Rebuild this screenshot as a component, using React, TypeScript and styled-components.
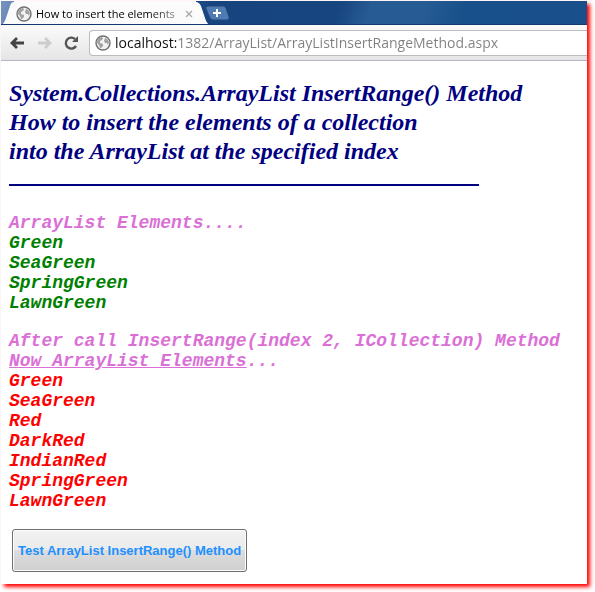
import React from "react";
import styled, { createGlobalStyle } from "styled-components";

const GlobalStyle = createGlobalStyle`
  * { box-sizing: border-box; }
  body { margin: 0; background: #fff; }
`;

const Backdrop = styled.div`
  padding: 1px 8px 8px 1px;
  overflow: hidden;
`;

const BrowserWindow = styled.div`
  background: #fff;
  box-shadow: 3px 3px 4px #f00;
`;

const TabStrip = styled.div`
  display: flex;
  height: 24px;
  overflow: hidden;
  border-bottom: 1px solid #123a70;
  background: linear-gradient(110deg, #7794bd 0, #5f82b3 20px, #17447f 200px, #17457f 320px, #275b94 350px, #275b94 400px, #17508a 440px, #1a4f8c 100%);
`;

const Tab = styled.div`
  display: flex;
  align-items: center;
  height: 24px;
  flex: none;
`;

const TabEdge = styled.svg`
  display: block;
  flex: none;
`;

const TabFace = styled.div`
  display: flex;
  align-items: center;
  gap: 4px;
  height: 24px;
  padding: 1px 3px 0 2px;
  background: #fbfbfb;
`;

const TabTitle = styled.span`
  width: 145px;
  white-space: nowrap;
  font: 11px/20px "Open Sans", "Noto Sans", sans-serif;
  color: transparent;
  background: linear-gradient(90deg, #000 112px, #999 142px);
  background-clip: text;
`;

const IconButton = styled.button`
  display: flex;
  align-items: center;
  justify-content: center;
  flex: none;
  padding: 0;
  border: 0;
  background: none;
`;

const NewTabButton = styled(IconButton)`
  margin: 4px 0 0 -5px;
  height: 16px;
`;

const Toolbar = styled.div`
  display: flex;
  align-items: center;
  height: 36px;
  padding-left: 7px;
  gap: 10px;
  background: linear-gradient(#fbfbfb, #e5e5e5);
  border-bottom: 1px solid #b4b8c4;
`;

const AddressBar = styled.label`
  display: flex;
  align-items: center;
  flex: 1;
  gap: 4px;
  height: 26px;
  padding-left: 5px;
  border: 1px solid #bcbcbc;
  border-right: 0;
  border-radius: 4px 0 0 4px;
  background: #fff;
`;

const AddressField = styled.input`
  flex: 1;
  min-width: 0;
  height: 24px;
  padding: 0;
  border: 0;
  outline: 0;
  font: 14px/24px "Open Sans", "Noto Sans", sans-serif;
  color: transparent;
  caret-color: #222;
  background: linear-gradient(90deg, #111 61px, #808080 61px);
  background-clip: text;
`;

const Page = styled.main`
  padding: 18px 8px 12px;
`;

const Heading = styled.h2`
  margin: 0;
  font: italic bold 24px/29px "Liberation Serif", "Times New Roman", serif;
  color: navy;
`;

const Rule = styled.hr`
  width: 470px;
  max-width: 100%;
  height: 2px;
  margin: 18px 0 27px;
  border: 0;
  background: navy;
`;

const Caption = styled.h3`
  margin: 0;
  font: italic bold 18px/20px "Liberation Mono", "Courier New", monospace;
  color: orchid;
`;

const Items = styled.ul<{ $color: string }>`
  margin: 0 0 18px;
  padding: 0;
  list-style: none;
  font: italic bold 18px/20px "Liberation Mono", "Courier New", monospace;
  color: ${(p) => p.$color};
`;

const TestButton = styled.button`
  display: block;
  height: 43px;
  margin-left: 3px;
  padding: 0 5px;
  border: 1px solid #707070;
  border-radius: 3px;
  box-shadow: inset 0 0 0 1px #fcfcfc;
  background: linear-gradient(#f2f2f2, #ebebeb 48%, #dddddd 50%, #cfcfcf);
  font: bold 13px/20px "Liberation Sans", Arial, sans-serif;
  color: dodgerblue;
`;

const Globe = () => (
  <svg width="16" height="16" viewBox="0 0 16 16" aria-hidden="true">
    <circle cx="8" cy="8" r="7" fill="#f2f2f2" stroke="#707070" strokeWidth="1.4" />
    <path
      d="M2 6 L4 3 L7 2 L8 3 L7 5 L5 6 L5 8 L8 9 L8 11 L6 13 L5 13 L4 10 L2 8 Z M10 3 L12 4 L14 7 L13 10 L12 8 L10 8 L9 6 Z"
      fill="#a2a2a2"
    />
  </svg>
);

const before = ["Green", "SeaGreen", "SpringGreen", "LawnGreen"];
const after = ["Green", "SeaGreen", "Red", "DarkRed", "IndianRed", "SpringGreen", "LawnGreen"];

export default function App() {
  return (
    <Backdrop>
      <GlobalStyle />
      <BrowserWindow>
        <TabStrip>
          <Tab>
            <TabEdge width="13" height="24" viewBox="0 0 13 24" aria-hidden="true">
              <path d="M0 24 C3 23 4 20 6 14 L9 5 Q10 1 13 1 V24 Z" fill="#fbfbfb" />
            </TabEdge>
            <TabFace>
              <Globe />
              <TabTitle>How to insert the elements</TabTitle>
              <IconButton aria-label="Close tab">
                <svg width="8" height="8" viewBox="0 0 8 8" aria-hidden="true">
                  <path d="M1 1 L7 7 M7 1 L1 7" stroke="#aaa" strokeWidth="1.4" />
                </svg>
              </IconButton>
            </TabFace>
            <TabEdge width="14" height="24" viewBox="0 0 14 24" aria-hidden="true">
              <path d="M14 24 C11 23 10 20 8 14 L5 5 Q3 1 0 1 V24 Z" fill="#fbfbfb" />
            </TabEdge>
          </Tab>
          <NewTabButton aria-label="New tab">
            <svg width="26" height="16" viewBox="0 0 26 16" aria-hidden="true">
              <path d="M3 1 H18 Q20 1 21 3 L24 12 Q25 15 22 15 H8 Q6 15 5 13 L1 4 Q0 1 3 1Z" fill="#4f7bb2" stroke="#20477c" />
              <path d="M12 4 V12 M8 8 H16" stroke="#fff" strokeWidth="2" />
            </svg>
          </NewTabButton>
        </TabStrip>
        <Toolbar>
          <IconButton aria-label="Back">
            <svg width="17" height="16" viewBox="0 0 17 16" aria-hidden="true">
              <path d="M16 8 H5 M9 3 L4 8 L9 13" fill="none" stroke="#444" strokeWidth="2.8" />
            </svg>
          </IconButton>
          <IconButton aria-label="Forward">
            <svg width="17" height="16" viewBox="0 0 17 16" aria-hidden="true">
              <path d="M3 8 H14 M10 3 L15 8 L10 13" fill="none" stroke="#ccc" strokeWidth="2.8" />
            </svg>
          </IconButton>
          <IconButton aria-label="Reload">
            <svg width="17" height="16" viewBox="0 0 17 16" aria-hidden="true">
              <path d="M14 11 A5.5 5.5 0 1 1 13 4" fill="none" stroke="#555" strokeWidth="2.4" />
              <path d="M16 1 V7 H10 Z" fill="#555" />
            </svg>
          </IconButton>
          <AddressBar>
            <Globe />
            <AddressField
              aria-label="Address"
              defaultValue="localhost:1382/ArrayList/ArrayListInsertRangeMethod.aspx"
            />
          </AddressBar>
        </Toolbar>
        <Page>
          <Heading>
            System.Collections.ArrayList InsertRange() Method
            <br />
            How to insert the elements of a collection
            <br />
            into the ArrayList at the specified index
          </Heading>
          <Rule />
          <Caption>ArrayList Elements....</Caption>
          <Items $color="green">
            {before.map((name) => <li key={name}>{name}</li>)}
          </Items>
          <Caption>
            After call InsertRange(index 2, ICollection) Method
            <br />
            <u>Now ArrayList Elements</u>...
          </Caption>
          <Items $color="red">
            {after.map((name) => <li key={name}>{name}</li>)}
          </Items>
          <TestButton>Test ArrayList InsertRange() Method</TestButton>
        </Page>
      </BrowserWindow>
    </Backdrop>
  );
}
